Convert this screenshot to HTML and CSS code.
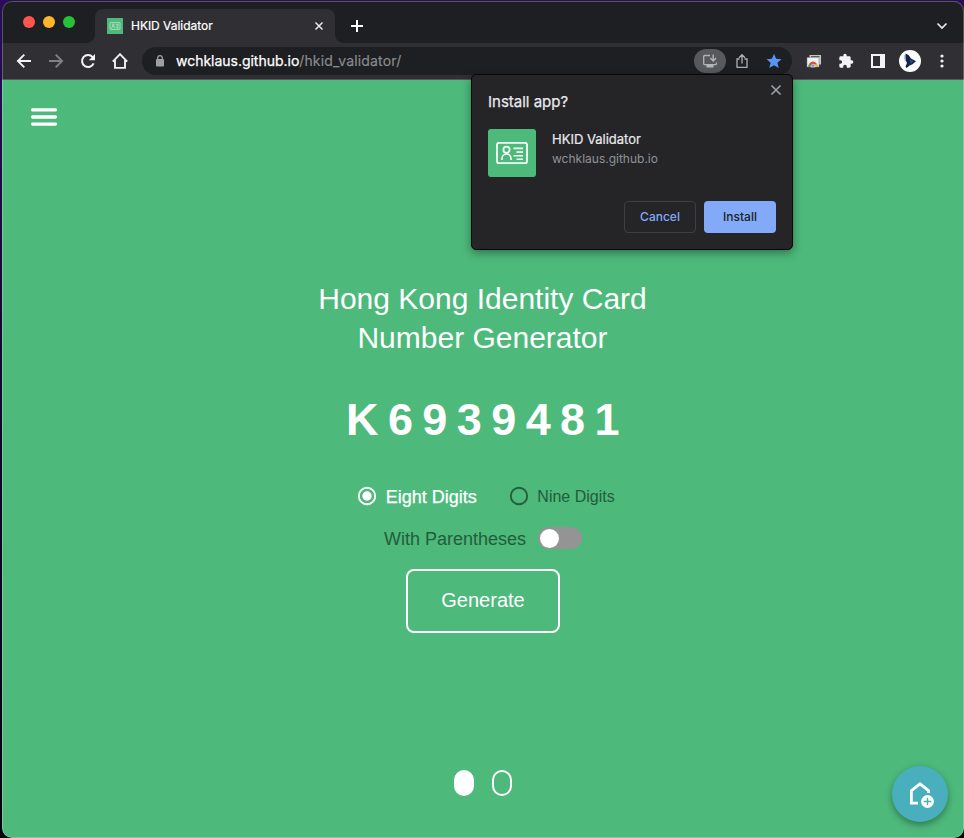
FILE: index.html
```html
<!DOCTYPE html>
<html lang="en">
<head>
<meta charset="utf-8">
<title>HKID Validator</title>
<link rel="stylesheet" href="styles.css">
</head>
<body>
<div class="window">
  <header class="tabs">
    <div class="lights"><i class="red"></i><i class="yellow"></i><i class="green"></i></div>
    <div class="tab">
      <svg class="favicon" width="16" height="16" viewBox="0 0 48 48"><rect width="48" height="48" fill="#4db97b"/><g fill="none" stroke="#bfe6ce" stroke-width="2.4"><rect x="9" y="14" width="30" height="20" rx="2"/><circle cx="18.500" cy="21" r="3"/><path d="M14 31v-1.500a4.500 4 0 0 1 9 0V31M26 19h9M29 23h6M26 27h9M29 30h6"/></g></svg>
      <span class="tab-name">HKID Validator</span>
      <svg class="tab-close" width="10" height="10" viewBox="0 0 10 10"><path d="M1.500 1.500l7 7m0-7l-7 7" stroke="#e8eaed" stroke-width="1.500"/></svg>
    </div>
    <svg class="plus" width="14" height="14" viewBox="0 0 14 14"><path d="M7 1v12M1 7h12" stroke="#fff" stroke-width="2"/></svg>
    <svg class="chevron" width="12" height="8" viewBox="0 0 12 8"><path d="M1.500 1.500L6 6l4.500-4.500" fill="none" stroke="#e8eaed" stroke-width="1.700"/></svg>
  </header>
  <div class="toolbar">
    <svg class="nav" viewBox="0 0 16 16"><path d="M15 8H2M8.300 1.600L1.900 8l6.400 6.400" fill="none" stroke="#f1f3f4" stroke-width="1.900"/></svg>
    <svg class="nav" viewBox="0 0 16 16"><path d="M1 8h13M7.700 1.600L14.100 8l-6.400 6.400" fill="none" stroke="#808185" stroke-width="1.900"/></svg>
    <svg class="nav" viewBox="0 0 16 16"><path d="M13.600 10.300A6 6 0 1 1 12.600 4.100" fill="none" stroke="#f1f3f4" stroke-width="2"/><path d="M15 1v6.200H8.800z" fill="#f1f3f4"/></svg>
    <svg class="nav" viewBox="0 0 16 16"><path d="M.8 8.600L8 1.200l7.200 7.400M3 7.300v7.600h10V7.300" fill="none" stroke="#f1f3f4" stroke-width="1.900"/></svg>
    <div class="address">
      <svg class="lock" width="10" height="12" viewBox="0 0 10 12"><rect x="1" y="4" width="8" height="7.500" rx="1" fill="#9aa0a6"/><path d="M2.700 5V3a2.300 2.300 0 0 1 4.600 0v2" fill="none" stroke="#9aa0a6" stroke-width="1.300"/></svg>
      <span class="url"><b>wchklaus.github.io</b>/hkid_validator/</span>
      <span class="install-chip"><svg width="16" height="16" viewBox="0 0 16 16"><path d="M8 2.500H2.700a1 1 0 0 0-1 1v7.200a1 1 0 0 0 1 1h10.700a1 1 0 0 0 1-1V9.500" fill="none" stroke="#b4b5b7" stroke-width="1.300"/><path d="M4.500 12h7v2.500h-7z" fill="#b4b5b7"/><path d="M11.200 1.500v6M8.300 5l2.900 2.900L14.100 5" fill="none" stroke="#b4b5b7" stroke-width="1.400"/></svg></span>
      <svg class="share" width="14" height="16" viewBox="0 0 14 16"><path d="M4.500 6H2v8.300h10V6H9.500M7 10.500V2M4 4.700l3-3 3 3" fill="none" stroke="#aeb0b4" stroke-width="1.300"/></svg>
      <svg class="star" width="16" height="16" viewBox="0 0 16 16"><path fill="#5b92f5" d="M8 .8l2.100 5 5.400.4-4.100 3.600 1.300 5.300L8 12.200l-4.700 2.900 1.300-5.300L.5 6.200l5.400-.4z"/></svg>
    </div>
    <svg class="ext cards" viewBox="0 0 16 16"><path d="M3.500 2H15v9.500H3.500z" fill="#c5c9ca"/><path d="M5 3.600h8.500" stroke="#3c5c4a"/><path d="M1 4.500h12V14H1z" fill="#eff1f1" stroke="#76797b" stroke-width=".5"/><path d="M2.400 14a4.600 5.600 0 0 1 9.200 0z" fill="#de4d3f"/><path d="M2.400 14c0-1.800.5-2.700 1-3.500L6 14z" fill="#3da45a"/><path d="M8 11.200h3c.4.800.6 1.700.6 2.800H8z" fill="#f3b82f"/><path d="M4.900 14a2.100 2.500 0 0 1 4.200 0z" fill="#4285f4" stroke="#fff" stroke-width=".6"/></svg>
    <svg class="ext puzzle" viewBox="0 0 24 24"><path fill="#f1f3f4" d="M20.500 11H19V7c0-1.100-.9-2-2-2h-4V3.500a2.500 2.500 0 0 0-5 0V5H4c-1.100 0-2 .9-2 2v3.800h1.500a2.700 2.700 0 0 1 0 5.400H2V20c0 1.100.9 2 2 2h3.800v-1.500a2.700 2.700 0 0 1 5.400 0V22H17c1.100 0 2-.9 2-2v-4h1.500a2.500 2.500 0 0 0 0-5z"/></svg>
    <svg class="ext panel" viewBox="0 0 16 16"><path d="M2 2h9v12H2z" fill="none" stroke="#f1f3f4" stroke-width="2"/><path d="M10 1h5v14h-5z" fill="#f1f3f4"/></svg>
    <svg class="avatar" width="22" height="22" viewBox="0 0 22 22"><circle cx="11" cy="11" r="11" fill="#fbfcfd"/><path d="M6.500 3.500l3 1.500 2.500 3.500 5 2.800-3.500 3-2.500 1-3.500 2.700-1-1.500 1.500-3.500-1.500-3z" fill="#152348"/><path d="M5.500 5v3l1 3" fill="none" stroke="#a6c8dc" stroke-width="1.200"/><path d="M10.500 9l4 2.500-3 2z" fill="#29498c"/></svg>
    <svg class="more" width="4" height="14" viewBox="0 0 4 14"><g fill="#f1f3f4"><circle cx="2" cy="2" r="1.600"/><circle cx="2" cy="7" r="1.600"/><circle cx="2" cy="12" r="1.600"/></g></svg>
  </div>
  <main class="page">
    <svg class="burger" width="26" height="18" viewBox="0 0 26 18"><path d="M1.600 1.900h22.800M1.600 9h22.800M1.600 16.100h22.800" stroke="#fff" stroke-width="3.300" stroke-linecap="round"/></svg>
    <section class="generator">
      <h1>Hong Kong Identity Card<br>Number Generator</h1>
      <div class="number">K6939481</div>
      <div class="choices">
        <label class="choice on"><svg class="radio" width="20" height="20" viewBox="0 0 20 20"><circle cx="10" cy="10" r="8.200" fill="none" stroke="#fff" stroke-width="1.900"/><circle cx="10" cy="10" r="4.700" fill="#fff"/></svg><span class="choice-text">Eight Digits</span></label>
        <label class="choice off"><svg class="radio" width="20" height="20" viewBox="0 0 20 20"><circle cx="10" cy="10" r="8.200" fill="none" stroke="#235d3c" stroke-width="1.900"/></svg><span class="choice-text">Nine Digits</span></label>
      </div>
      <div class="paren"><span class="choice-text">With Parentheses</span><span class="switch"><i></i></span></div>
      <button class="generate">Generate</button>
    </section>
    <div class="pager"><i class="current"></i><i></i></div>
  </main>
  <div class="fab"><svg width="28" height="28" viewBox="0 0 28 28"><path d="M12 23.100H5.400V10.600L14 3.800l8.600 6.800V13" fill="none" stroke="#fff" stroke-width="2.800"/><circle cx="21.500" cy="21.500" r="6.400" fill="#fff"/><path d="M21.500 17.700v7.600M17.700 21.500h7.600" stroke="#4aafbc" stroke-width="1.400"/></svg></div>
  <aside class="popup">
    <svg class="popup-close" width="12" height="12" viewBox="0 0 12 12"><path d="M1.500 1.500l9 9m0-9l-9 9" stroke="#9aa0a6" stroke-width="1.700"/></svg>
    <h2>Install app?</h2>
    <div class="app">
      <svg class="app-icon" width="48" height="48" viewBox="0 0 48 48"><rect width="48" height="48" rx="3" fill="#4db97b"/><g fill="none" stroke="#f5fff8" stroke-width="1.800"><rect x="9" y="13.800" width="30" height="20.400" rx="2"/><circle cx="18.500" cy="20.700" r="3.100"/><path d="M14 31v-1.500a4.500 4.500 0 0 1 9 0V31M25.500 19.400H35M28.500 23.100H35M25.500 26.800H35M28.500 30.200H35" stroke-width="1.600"/></g></svg>
      <div><div class="app-name">HKID Validator</div><div class="app-host">wchklaus.github.io</div></div>
    </div>
    <div class="actions"><button class="cancel">Cancel</button><button class="install">Install</button></div>
  </aside>
</div>
</body>
</html>
```
FILE: styles.css
```css
* { box-sizing: border-box; }
body {
  margin: 0;
  height: 838px;
  padding: 1px 0 0 2px;
  overflow: hidden;
  background: linear-gradient(#2c0b5e, #160633 40%, #05020d);
  font-family: Inter, "Liberation Sans", sans-serif;
}
svg { display: block; flex: none; }
i { display: block; }
button { padding: 0; font: inherit; }

.window {
  position: relative;
  display: flex;
  flex-direction: column;
  width: 962px;
  height: 837px;
  border-radius: 10px;
  overflow: hidden;
  background: #4db97b;
}
.window::after {
  content: "";
  position: absolute;
  inset: 0;
  border: 1px solid rgba(255, 255, 255, .25);
  border-radius: 10px;
  pointer-events: none;
}

.tabs { display: flex; height: 42px; background: #1e1f22; }
.lights { display: flex; gap: 8px; padding: 15px 0 0 21px; width: 93px; background: #1e1f22; border-bottom-right-radius: 8px; }
.lights i { width: 12px; height: 12px; border-radius: 50%; }
.red { background: #ff5550; }
.yellow { background: #ffb429; }
.green { background: #26c138; }
.tab {
  position: relative;
  display: flex;
  align-items: center;
  width: 240px;
  height: 34px;
  margin-top: 8px;
  padding: 0 11px 0 12px;
  border-radius: 8px 8px 0 0;
  background: #303034;
}
.tab::before, .tab::after {
  content: "";
  position: absolute;
  bottom: 0;
  width: 8px;
  height: 8px;
}
.tab::before { left: -8px; background: radial-gradient(circle at 0 0, transparent 7.5px, #303034 8px); }
.tab::after { right: -8px; background: radial-gradient(circle at 100% 0, transparent 7.5px, #303034 8px); }
.tab-name { flex: 1; margin: 0 0 2px 8px; color: #fff; font-size: 12px; letter-spacing: -.03px; -webkit-text-stroke: .2px #fff; }
.plus { margin: 18px 0 0 15px; }
.chevron { margin: 21px 16px 0 auto; }

.toolbar { display: flex; align-items: center; height: 37px; padding: 0 19px 0 14px; background: #303034; border-bottom: 1px solid #57575b; }
.nav { width: 16px; height: 16px; margin-right: 16px; }
.address { display: flex; align-items: center; width: 650px; height: 28px; margin-left: -2px; padding: 0 10px 0 13px; border-radius: 14px; background: #1e1f22; }
.url { flex: 1; margin: 0 0 1px 11px; color: #8b8c8f; font-size: 14px; letter-spacing: .14px; -webkit-text-stroke: .15px currentColor; }
.url b { color: #fff; font-weight: 400; letter-spacing: -.02px; -webkit-text-stroke: .25px #fff; }
.install-chip { display: flex; align-items: center; justify-content: center; width: 32px; height: 24px; border-radius: 12px; background: #58595c; }
.share { margin: 0 17px 0 9px; }
.star { margin-right: 0; }
.ext { width: 16px; height: 16px; margin-right: 16px; }
.cards { margin-left: 14px; }
.panel { margin-right: 13px; }
.more { margin-left: 19px; }

.page { flex: 1; display: flex; flex-direction: column; color: #fff; font-family: "Liberation Sans", Arial, sans-serif; }
.burger { margin: 28px 0 0 29px; }
.generator { display: flex; flex-direction: column; align-items: center; padding-top: 153px; }
h1 { margin: 0 1px 0 0; font-size: 30px; line-height: 39px; font-weight: 400; text-align: center; }
.number { margin: 37px 0 0 9px; font-size: 45px; line-height: 52px; font-weight: 700; letter-spacing: 9.400px; }
.choices { display: flex; align-items: center; gap: 32px; height: 24px; margin: 38px 0 0 6px; }
.choice { display: flex; align-items: center; }
.radio { margin-right: 8.500px; }
.on { font-size: 18px; -webkit-text-stroke: .25px #fff; }
.choice-text { padding-top: 2px; }
.off { color: #235d3c; font-size: 16px; }
.paren { display: flex; align-items: center; gap: 12px; height: 24px; margin-top: 18px; color: #235d3c; font-size: 18px; }
.switch { width: 44px; height: 22px; padding: 1.500px; border-radius: 11px; background: #949494; }
.switch i { width: 19px; height: 19px; border-radius: 50%; background: #fff; }
.generate { width: 154px; height: 64px; margin-top: 19px; padding-bottom: 1px; border: 2px solid #fff; border-radius: 8px; background: none; color: #fff; font-size: 20px; }
.pager { display: flex; gap: 18px; justify-content: center; margin: auto 0 42px; }
.pager i { width: 20px; height: 26px; border: 2px solid #fff; border-radius: 10px; }
.pager .current { background: #fff; }

.fab { position: absolute; right: 16px; bottom: 16px; display: flex; align-items: center; justify-content: center; width: 56px; height: 56px; border-radius: 50%; background: #4aafbc; box-shadow: 0 3px 7px rgba(0, 0, 0, .35); }

.popup { position: absolute; left: 469px; top: 73px; width: 322px; height: 176px; padding: 17px 16px 16px; border: 1px solid #060607; border-radius: 5px; background: #252528; box-shadow: 0 3px 10px rgba(0, 0, 0, .38); }
.popup-close { position: absolute; right: 10px; top: 9px; }
h2 { margin: 0; color: #e8eaed; font-size: 15px; line-height: 20px; font-weight: 400; -webkit-text-stroke: .25px #e8eaed; }
.app { display: flex; gap: 16px; margin-top: 17px; }
.app-name { color: #e8eaed; font-size: 13px; line-height: 20px; -webkit-text-stroke: .2px #e8eaed; }
.app-host { color: #8f9398; font-size: 12px; line-height: 19px; }
.actions { display: flex; justify-content: flex-end; gap: 8px; margin-top: 24px; }
.actions button { width: 72px; height: 32px; padding-bottom: 2px; border-radius: 4px; font-size: 12px; font-weight: 500; }
.cancel { border: 1px solid #3c4043; background: none; color: #82aaf8; }
.install { border: 0; background: #82aaf8; color: #202124; }
```
